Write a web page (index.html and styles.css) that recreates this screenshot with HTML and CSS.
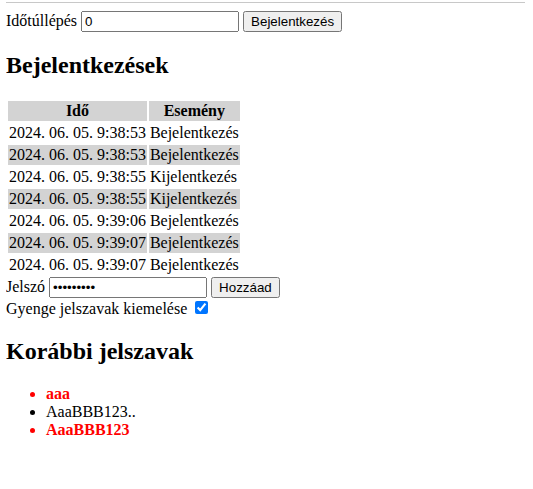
FILE: index.html
```html
<!DOCTYPE html>
<html>
<head>
<meta charset="utf-8">
<link rel="stylesheet" href="styles.css">
</head>
<body>
<div class="topline"></div>
<div class="row">Időtúllépés <input class="field" type="text" value="0"> <button class="btn">Bejelentkezés</button></div>
<h2>Bejelentkezések</h2>
<table class="log">
<thead><tr><th>Idő</th><th>Esemény</th></tr></thead>
<tbody>
<tr><td>2024. 06. 05. 9:38:53</td><td>Bejelentkezés</td></tr>
<tr><td>2024. 06. 05. 9:38:53</td><td>Bejelentkezés</td></tr>
<tr><td>2024. 06. 05. 9:38:55</td><td>Kijelentkezés</td></tr>
<tr><td>2024. 06. 05. 9:38:55</td><td>Kijelentkezés</td></tr>
<tr><td>2024. 06. 05. 9:39:06</td><td>Bejelentkezés</td></tr>
<tr><td>2024. 06. 05. 9:39:07</td><td>Bejelentkezés</td></tr>
<tr><td>2024. 06. 05. 9:39:07</td><td>Bejelentkezés</td></tr>
</tbody>
</table>
<div>Jelszó <input class="field" type="password" value="AaaBBB123"> <button class="btn">Hozzáad</button></div>
<div>Gyenge jelszavak kiemelése <input type="checkbox" checked></div>
<h2>Korábbi jelszavak</h2>
<ul>
<li class="weak">aaa</li>
<li>AaaBBB123..</li>
<li class="weak">AaaBBB123</li>
</ul>
</body>
</html>
```
FILE: styles.css
```css
html { background: #fff; }
body {
  margin: 0 8px 8px 6px;
  font-family: "Liberation Serif", serif;
  font-size: 16px;
}
.topline {
  margin: 2px 0 8px -6px;
  width: 100vw;
  height: 1px;
  background: #c8c8c8;
}
.field {
  width: 150px;
  font-family: "Liberation Sans", Arial, sans-serif;
  font-size: 13.33px;
}
.btn {
  font-family: "Liberation Sans", Arial, sans-serif;
  font-size: 13.33px;
}
.log th { background: #d3d3d3; }
.log tbody tr:nth-child(even) { background: #d3d3d3; }
.weak { color: red; font-weight: bold; }
```
